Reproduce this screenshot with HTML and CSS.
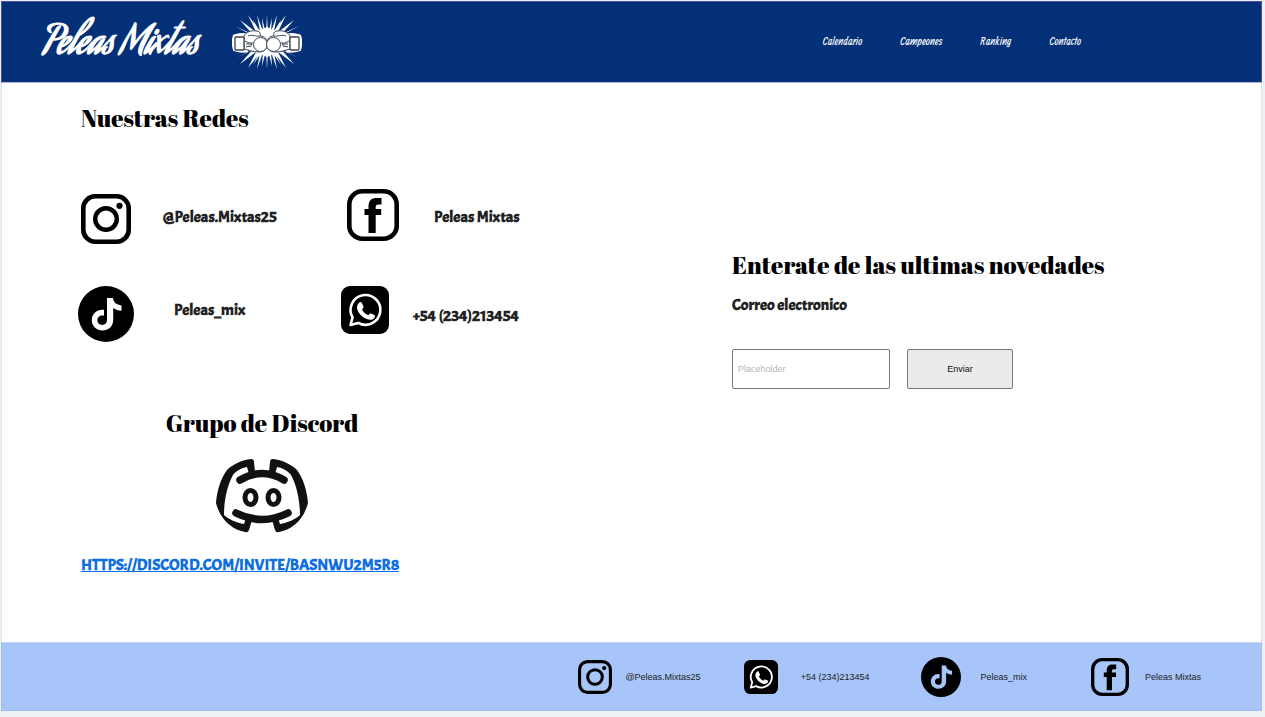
FILE: index.html
```
<!DOCTYPE html>
<html lang="es">
<head>
<meta charset="utf-8">
<meta name="viewport" content="width=device-width, initial-scale=1">
<title>Peleas Mixtas - Contacto</title>
<link rel="stylesheet" href="styles.css">
</head>
<body>
<svg class="sprite" aria-hidden="true">
  <symbol id="instagram" viewBox="0 0 50 50">
    <rect x="2.300" y="2.300" width="45.400" height="45.400" rx="12" fill="none" stroke="currentColor" stroke-width="4.600"/>
    <circle cx="25" cy="25" r="10.8" fill="none" stroke="currentColor" stroke-width="4.400"/>
    <circle cx="38.5" cy="11.8" r="3.1" fill="currentColor"/>
  </symbol>
  <symbol id="facebook" viewBox="0 0 52 52">
    <rect x="2.300" y="2.300" width="47.400" height="47.400" rx="13" fill="none" stroke="currentColor" stroke-width="4.600"/>
    <path fill="currentColor" d="M21.500 44V26h-4v-6h4v-2.500c0-6 2.800-8.500 8.500-8.500h4.500v6.500h-2.500c-2.400 0-3.300.8-3.300 2.600v1.900h5.500v6h-5.500v18z"/>
  </symbol>
  <symbol id="tiktok" viewBox="0 0 56 56">
    <path fill="currentColor" fill-rule="evenodd" d="M28 0a28 28 0 1 0 0 56a28 28 0 1 0 0-56zM29 12h6c.5 4.500 3.500 6.800 8.500 7.400v5.300c-3.300 0-6-1-8.300-2.600v12c0 6.500-4.800 10.400-10.700 10.400c-6 0-10.700-4.500-10.700-10.300c0-6.500 5.300-11.200 12.200-10.400v6c-3.600-.9-6.600 1.200-6.600 4.400c0 2.800 2.100 4.700 4.900 4.700c2.900 0 4.700-1.800 4.700-5.100z"/>
  </symbol>
  <symbol id="whatsapp" viewBox="0 0 48 48">
    <rect width="48" height="48" rx="9" fill="currentColor"/>
    <path fill="none" stroke="#fff" stroke-width="2.600" stroke-linejoin="round" d="M9.500 39l2.100-7.600a14.900 14.900 0 1 1 5.600 5.500z"/>
    <path fill="#fff" d="M18.700 16.300c.6-.4 1.700-.4 2.100.4l1.700 3.800c.4 1-.8 2-1.500 2.900c1.400 2.800 3.500 4.700 6.400 5.900c.8-.8 1.500-2.300 2.400-1.900l3.600 1.700c.8.4.5 1.900 0 2.700c-1.500 2.300-4.500 2.500-7.700 1.200c-4.600-1.800-7.800-5.300-9.300-9.300c-1-3 .3-6 2.300-7.400z"/>
  </symbol>
</svg>

<div class="page">
  <header class="header">
    <a class="brand" href="#">Peleas Mixtas</a>
    <svg class="gloves" viewBox="0 0 70 56" aria-hidden="true">
      <path fill="#fff" d="M34 20L35 1l1 19zM28.500 20L25 1l6.500 18zM41.500 20L45 1l-6.500 18zM25 20L16 1l13.500 18zM45 20L54 1 40.500 19zM22 22L8 6l18.500 14zM48 22L62 6 43.500 20zM20 20L3 12l20 11zM50 20l17-8-20 11zM34 36L35 55l1-19zM28.500 36l-3.500 19 6.500-18zM41.500 36l3.500 19-6.500-18zM25 36L16 54l13.500-17zM45 36l9 18-13.500-17zM22 34L8 50l18.500-14zM48 34l14 16-18.500-14zM20 36L4 44l19-10zM50 36l16 8-19-10zM31 18L30 4l3.500 14zM39 18L40 4l-3.500 14zM28 37l-7 14 9.500-14zM42 37l7 14-9.500-14zM31 37l-1 15 4-15zM39 37l1 15-4-15zM26 19L21 6l8 13zM44 19L49 6l-8 13z"/>
      <path fill="#fff" d="M20 36l15 7 15-7V20l-15-7-15 7z"/>
      <g id="glove" fill="#fff" stroke="#3b4453" stroke-width="1">
        <path d="M1.500 21q7-2.500 14-1v18q-7 1-14-1.500Q-1.500 28 1.500 21z" stroke="#fff"/>
        <path d="M12 22c2-4 7-6 13-5 3 .5 4 3 3 5 5 0 7 3 7 8s-3 8-8 8c-6 0-11-2-15-3z"/>
        <rect x="3" y="23" width="9" height="13" rx="1" stroke-width="1.300"/>
        <circle cx="28.500" cy="30.500" r="7"/>
        <path fill="none" d="M13 27l4 2h4M14 30h6l-2 3M14 33l4-1M16 22c4-2 9 1 12 0"/>
      </g>
      <use href="#glove" transform="matrix(-1 0 0 1 70 0)"/>
    </svg>
    <nav class="nav">
      <a href="#">Calendario</a>
      <a href="#">Campeones</a>
      <a href="#">Ranking</a>
      <a href="#">Contacto</a>
    </nav>
  </header>

  <main class="main">
    <div class="networks">
      <h1 class="title">Nuestras Redes</h1>
      <ul class="social">
        <li class="account account-instagram"><svg class="icon"><use href="#instagram"/></svg><span class="account-name">@Peleas.Mixtas25</span></li>
        <li class="account account-facebook"><svg class="icon"><use href="#facebook"/></svg><span class="account-name">Peleas Mixtas</span></li>
        <li class="account account-tiktok"><svg class="icon"><use href="#tiktok"/></svg><span class="account-name">Peleas_mix</span></li>
        <li class="account account-whatsapp"><svg class="icon"><use href="#whatsapp"/></svg><span class="account-name">+54 (234)213454</span></li>
      </ul>
      <section class="discord">
        <h2 class="title">Grupo de Discord</h2>
        <svg class="discord-logo" viewBox="0 0 92 74" aria-hidden="true">
          <path id="discord-side" fill="#111" fill-rule="evenodd" d="M11 11C17 5 26 1 35 0q3 0 3 3l1 10-6 2-2-7C25 9 20 12 17 16 11 27 8 42 8 56c4 4 13 8 20 9l2-6 6 2-3 10q-1 3-4 2C18 71 5 63 0 44 1 31 5 19 11 11z"/>
          <use href="#discord-side" transform="matrix(-1 0 0 1 92 0)"/>
          <path d="M24 21q22-13 44 0M20 54q26 13 52 0" fill="none" stroke="#111" stroke-width="7.500" stroke-linecap="round"/>
          <ellipse cx="34.500" cy="38.500" rx="5.500" ry="7" fill="none" stroke="#111" stroke-width="5"/>
          <ellipse cx="57.500" cy="38.500" rx="5.500" ry="7" fill="none" stroke="#111" stroke-width="5"/>
        </svg>
        <a class="discord-link" href="#">HTTPS://DISCORD.COM/INVITE/BASNWU2M5R8</a>
      </section>
    </div>

    <form class="news">
      <h2 class="title">Enterate de las ultimas novedades</h2>
      <label class="news-label" for="email">Correo electronico</label>
      <div class="news-fields">
        <input class="news-input" id="email" type="text" placeholder="Placeholder">
        <button class="news-button" type="button">Enviar</button>
      </div>
    </form>
  </main>

  <footer class="footer">
    <div class="contact contact-instagram"><svg class="icon"><use href="#instagram"/></svg><span>@Peleas.Mixtas25</span></div>
    <div class="contact contact-whatsapp"><svg class="icon"><use href="#whatsapp"/></svg><span>+54 (234)213454</span></div>
    <div class="contact contact-tiktok"><svg class="icon"><use href="#tiktok"/></svg><span>Peleas_mix</span></div>
    <div class="contact contact-facebook"><svg class="icon"><use href="#facebook"/></svg><span>Peleas Mixtas</span></div>
  </footer>
</div>
</body>
</html>
```
FILE: styles.css
```
* {
  box-sizing: border-box;
}

body {
  margin: 0;
  padding: 1px 3px 6px 1px;
  min-height: 100vh;
  display: flex;
  background: #edf0f5;
  color: #222;
  font-family: "Liberation Sans", Arial, sans-serif;
}

.sprite {
  position: absolute;
  width: 0;
  height: 0;
}

.page {
  flex: 1;
  display: flex;
  flex-direction: column;
  background: #fff;
}

.header {
  display: flex;
  align-items: center;
  height: 82px;
  padding: 0 180px 0 41px;
  background: #043077;
  border: 1px solid #51519f;
  border-bottom-color: #b9b4dc;
}

.brand {
  width: 189px;
  padding-top: 6px;
  color: #fff;
  font: bold 40px/48px "Aguafina Script", "Liberation Sans", cursive;
  text-decoration: none;
  white-space: nowrap;
}

.gloves {
  width: 70px;
  height: 56px;
}

.nav {
  display: flex;
  gap: 38px;
  margin-left: auto;
}

.nav a {
  color: #fff;
  font: 13px/20px Ranga, "Liberation Sans", cursive;
  text-decoration: none;
}

.main {
  flex: 1;
  display: grid;
  grid-template-columns: 651fr 529fr;
  padding: 19px 0 64px 79px;
  border: solid #dfe5ee;
  border-width: 0 1px;
}

.title {
  margin: 0;
  color: #000;
  font: 24px/32px "Abril Fatface", "Liberation Serif", serif;
}

.social {
  display: grid;
  grid-template-columns: 263px auto;
  justify-content: start;
  row-gap: 42px;
  margin: 55px 0 0 -3px;
  padding: 0;
  list-style: none;
}

.account {
  display: flex;
  align-items: center;
  align-self: start;
}

.account-name,
.news-label,
.discord-link {
  font: bold 16px/20px Acme, "Liberation Sans", sans-serif;
}

.icon {
  flex: none;
  color: #000;
}

.account-instagram {
  gap: 32px;
  padding: 5px 0 0 3px;
}

.account-instagram .icon {
  width: 50px;
  height: 50px;
}

.account-instagram .account-name {
  padding-bottom: 4px;
}

.account-facebook {
  gap: 35px;
  padding-left: 6px;
}

.account-facebook .icon {
  width: 52px;
  height: 52px;
}

.account-facebook .account-name {
  padding-top: 4px;
}

.account-tiktok {
  gap: 40px;
}

.account-tiktok .icon {
  width: 56px;
  height: 56px;
}

.account-tiktok .account-name {
  padding-bottom: 8px;
}

.account-whatsapp {
  gap: 24px;
}

.account-whatsapp .icon {
  width: 48px;
  height: 48px;
}

.account-whatsapp .account-name {
  padding-top: 12px;
}

.discord {
  display: flex;
  flex-direction: column;
  align-items: center;
  width: 362px;
  margin-top: 65px;
}

.discord-logo {
  width: 92px;
  height: 74px;
  margin: 20px 0 22px;
}

.discord-link {
  align-self: flex-start;
  color: #0d6fe0;
}

.news {
  padding-top: 147px;
}

.news-label {
  display: block;
  margin-top: 14px;
}

.news-fields {
  display: flex;
  gap: 17px;
  margin-top: 34px;
}

.news-input,
.news-button {
  height: 40px;
  border: 1px solid #777;
  border-radius: 2px;
  font: 9px "Liberation Sans", Arial, sans-serif;
}

.news-input {
  width: 158px;
  padding: 0 5px;
  background: #fff;
}

.news-input::placeholder {
  color: #b5b5b5;
}

.news-button {
  width: 106px;
  background: #ebebeb;
  color: #111;
}

.footer {
  display: flex;
  justify-content: flex-end;
  align-items: center;
  height: 69px;
  padding-right: 60px;
  background: #a8c5fa;
  border: 1px solid #a3bce8;
  border-top-color: #c5d5f0;
  font-size: 9px;
}

.contact {
  display: flex;
  align-items: center;
}

.contact-instagram {
  gap: 13px;
  margin-right: 43px;
}

.contact-instagram .icon,
.contact-whatsapp .icon {
  width: 34px;
  height: 34px;
}

.contact-whatsapp {
  gap: 23px;
  margin-right: 52px;
}

.contact-tiktok {
  gap: 19px;
  margin-right: 64px;
}

.contact-tiktok .icon {
  width: 40px;
  height: 40px;
}

.contact-facebook {
  gap: 16px;
}

.contact-facebook .icon {
  width: 38px;
  height: 38px;
}
```
